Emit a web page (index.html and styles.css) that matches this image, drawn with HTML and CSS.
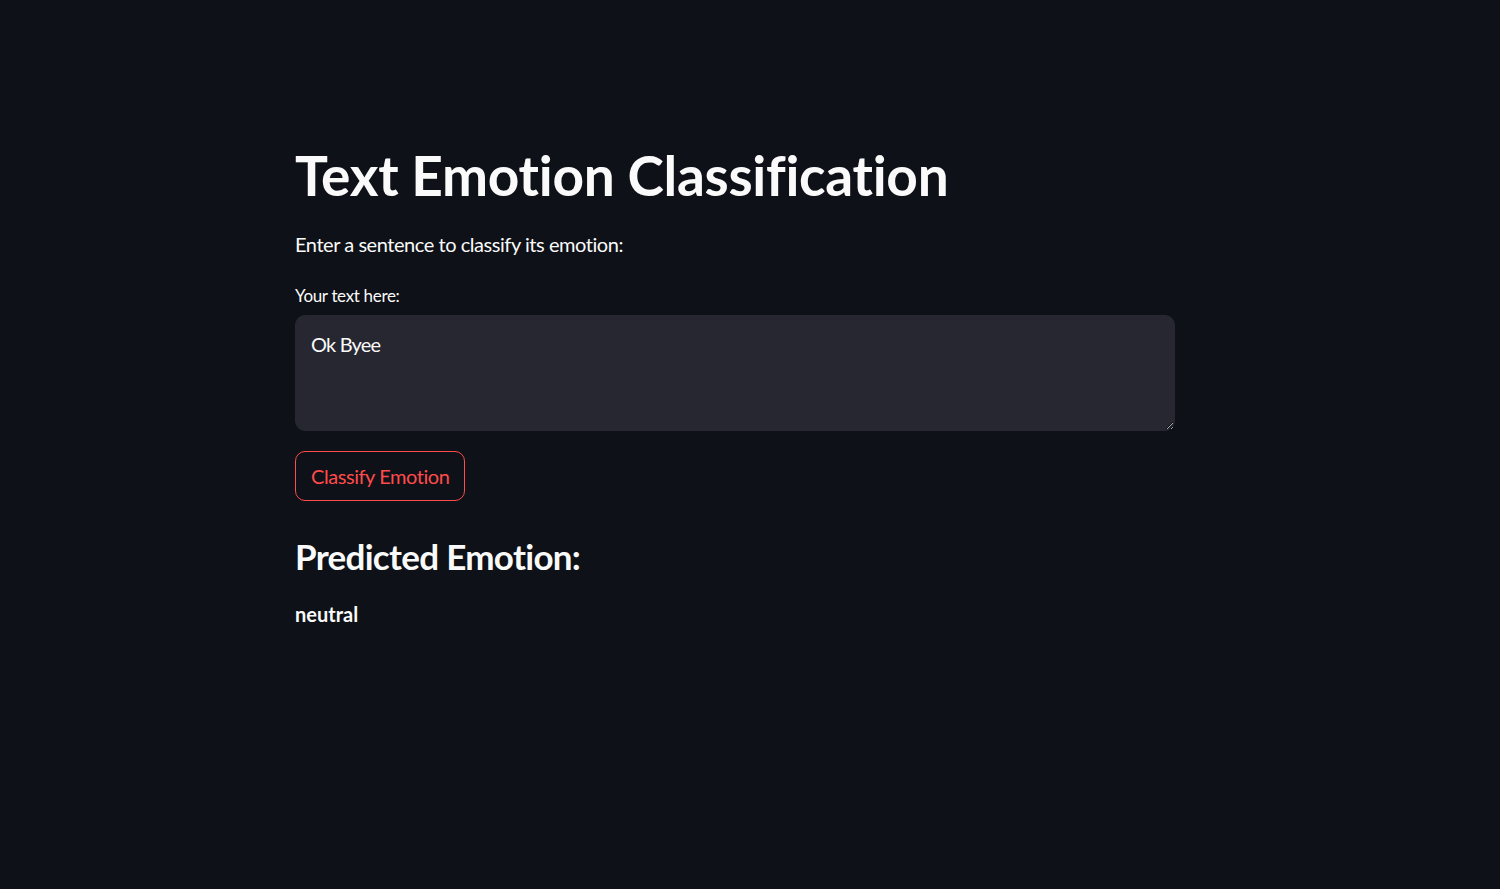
FILE: index.html
```html
<!DOCTYPE html>
<html lang="en">
<head>
<meta charset="utf-8">
<title>Text Emotion Classification</title>
<link rel="stylesheet" href="styles.css">
</head>
<body>
<main class="main">
  <div class="block">
    <h1 class="title">Text Emotion Classification</h1>
    <p class="intro">Enter a sentence to classify its emotion:</p>
    <label class="label" for="txt">Your text here:</label>
    <textarea id="txt" class="textarea">Ok Byee</textarea>
    <div class="btn-row"><button class="btn" type="button">Classify Emotion</button></div>
    <h3 class="result-title">Predicted Emotion:</h3>
    <p class="result"><strong>neutral</strong></p>
  </div>
</main>
</body>
</html>
```

FILE: styles.css
```css
html, body {
  margin: 0;
  padding: 0;
  background: #0e1117;
  color: #fafafa;
  font-family: "Lato", "Liberation Sans", sans-serif;
  color-scheme: dark;
}
.main {
  min-height: 889px;
  box-sizing: border-box;
  padding: 142px 0 0 295px;
}
.block {
  width: 880px;
  display: flex;
  flex-direction: column;
  align-items: flex-start;
}
.title {
  margin: 0;
  font-size: 55px;
  line-height: 66px;
  font-weight: 700;
  letter-spacing: -0.3px;
}
.intro {
  margin: 20px 0 0;
  font-size: 20px;
  line-height: 32px;
  letter-spacing: -0.45px;
}
.label {
  margin-top: 22px;
  font-size: 17px;
  line-height: 28px;
  letter-spacing: -0.33px;
}
.textarea {
  margin-top: 5px;
  width: 880px;
  height: 116px;
  box-sizing: border-box;
  background: #262730;
  color: #fafafa;
  border: 1px solid #262730;
  border-radius: 10px;
  padding: 12px 15px;
  font-family: inherit;
  font-size: 20px;
  line-height: 32px;
  letter-spacing: -0.8px;
  outline: none;
  resize: vertical;
}
.btn-row {
  margin-top: 20px;
}
.btn {
  height: 50px;
  padding: 0 15px;
  background: #0e1117;
  color: #ff4b4b;
  border: 1px solid #ff4b4b;
  border-radius: 10px;
  font-family: inherit;
  font-size: 20px;
  line-height: 32px;
  letter-spacing: -0.44px;
}
.result-title {
  margin: 34px 0 0;
  font-size: 35px;
  line-height: 42px;
  font-weight: 700;
  letter-spacing: -0.7px;
}
.result {
  margin: 21px 0 0;
  font-size: 20px;
  line-height: 32px;
}
```
